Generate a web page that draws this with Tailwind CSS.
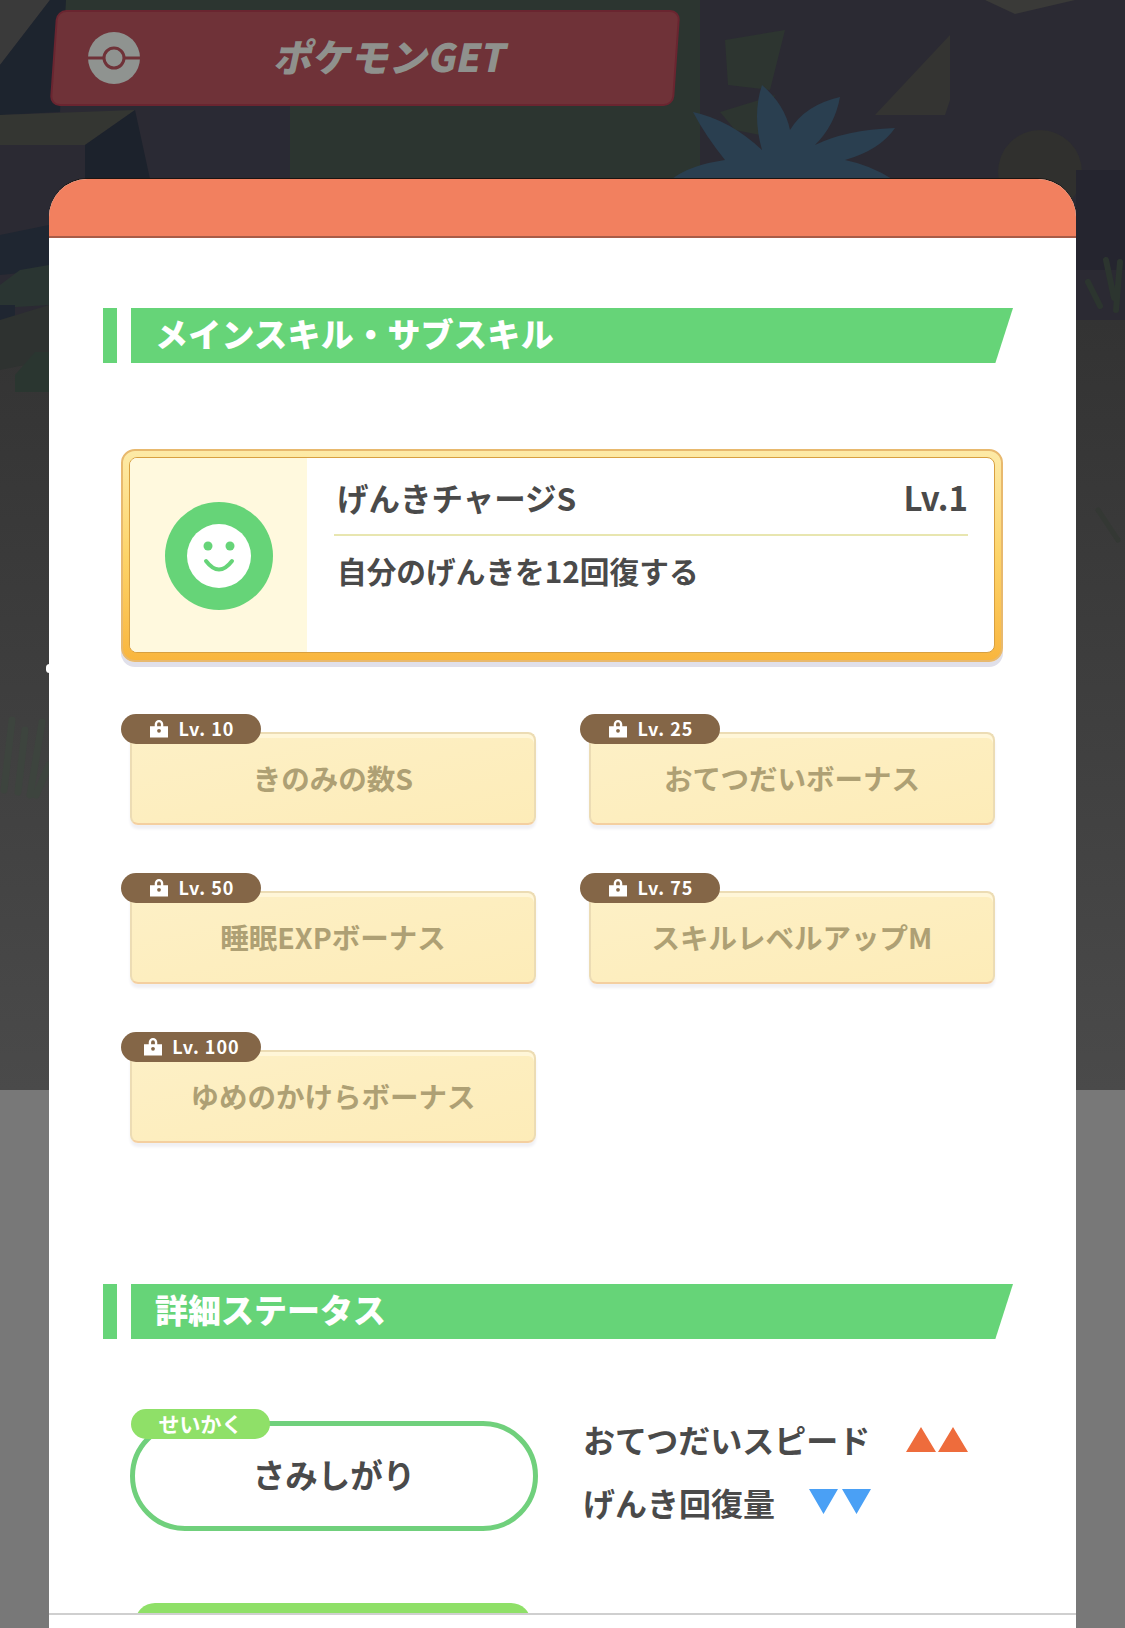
<!DOCTYPE html>
<html lang="ja">
<head>
  <meta charset="UTF-8" />
  <title>ポケモンGET</title>
  <script src="https://cdn.jsdelivr.net/npm/@tailwindcss/browser@4"></script>
</head>
<body class="bg-[#787878]">
  <div class="relative w-[1125px] h-[1628px] overflow-hidden font-['Noto_Sans_CJK_JP',sans-serif] font-bold text-[#4a4a4a]">

    <!-- jungle backdrop, dimmed -->
    <svg class="absolute left-0 top-0" width="1125" height="1090" viewBox="0 0 1125 1090">
      <defs>
        <linearGradient id="fade" x1="0" y1="0" x2="0" y2="1">
          <stop offset="0" stop-color="#333333" />
          <stop offset="1" stop-color="#4a4a4a" />
        </linearGradient>
      </defs>
      <rect width="1125" height="340" fill="#2b2a33" />
      <rect y="320" width="1125" height="770" fill="url(#fade)" />
      <polygon points="60,0 700,0 700,179 290,179 290,106 60,106" fill="#2c3530" />
      <polygon points="0,0 50,0 0,65" fill="#3a3a3a" />
      <polygon points="0,65 50,0 66,0 60,112 0,115" fill="#1d242e" />
      <polygon points="0,115 135,110 85,145 0,145" fill="#343632" />
      <polygon points="85,145 135,110 150,179 85,179" fill="#1c222c" />
      <polygon points="150,106 290,106 290,179 150,179" fill="#2a2a34" />
      <polygon points="0,235 49,225 49,270 0,275" fill="#1f2631" />
      <polygon points="0,285 20,270 49,265 49,305 0,308" fill="#2a3532" />
      <polygon points="0,305 15,305 15,320 0,325" fill="#1f2631" />
      <polygon points="0,320 49,305 49,360 0,370" fill="#2e3230" />
      <polygon points="15,375 35,352 49,352 49,392 15,392" fill="#2a3630" />
      <polygon points="700,0 760,0 760,179 700,179" fill="#2b2a33" />
      <polygon points="725,40 785,30 770,90 728,85" fill="#2d3530" />
      <polygon points="720,112 775,95 760,135 735,130" fill="#2d3530" />
      <path d="M672 179 Q690 165 725 160 Q705 135 693 112 Q730 120 762 150 Q752 115 762 85 Q785 105 790 130 Q805 105 840 97 Q835 125 815 145 Q845 130 895 128 Q880 150 845 160 Q870 165 892 179 Z" fill="#2a3f50" />
      <polygon points="875,115 950,35 950,100 945,115" fill="#343432" />
      <circle cx="1040" cy="172" r="42" fill="#30302e" />
      <polygon points="985,0 1075,0 1015,14" fill="#3a3a38" />
      <rect x="1076" y="170" width="49" height="100" fill="#25252f" />
      <g fill="none" stroke-linecap="round">
        <path d="M1088 282 L1100 306 M1106 260 L1114 298 M1120 262 L1116 310" stroke="#2c352f" stroke-width="6" />
        <path d="M1098 510 L1118 540" stroke="#343834" stroke-width="5" />
        <path d="M4 790 L12 720 M18 792 L25 730 M30 795 L42 722 M36 795 L49 765" stroke="#3d443e" stroke-width="7" />
      </g>
    </svg>

    <!-- get banner -->
    <div class="relative pt-[10px] pl-[53px]">
      <div class="w-[624px] h-[96px] -skew-x-[4deg] rounded-[10px] bg-[#6f3238] border-2 border-[#6a2530] flex items-center relative">
        <svg class="ml-[32px] skew-x-[4deg]" width="54" height="54" viewBox="0 0 54 54">
          <circle cx="27" cy="27" r="26" fill="#8f9390" />
          <rect x="0" y="25.500" width="54" height="3" fill="#6f3238" />
          <circle cx="27" cy="27" r="10" fill="#8f9390" stroke="#6f3238" stroke-width="3" />
        </svg>
        <span class="absolute left-[221px] top-[18px] text-[38.500px] leading-[50px] font-black text-[#8f918d] -skew-x-[8deg]">ポケモンGET</span>
      </div>
    </div>

    <!-- modal -->
    <div class="relative ml-[49px] mt-[73px] w-[1027px] h-[1449px] rounded-t-[38px] bg-white overflow-hidden shadow-[0_-1px_0_#1a1512]">
      <div class="h-[59px] bg-[#f2805f] border-b-2 border-b-[#a85c48]"></div>

      <div class="h-[1375px] overflow-hidden pt-[70px]">
        <!-- main skill / sub skill -->
        <div class="flex pl-[54px] gap-[14px] h-[55px]">
          <div class="w-[14px] bg-[#66d478]"></div>
          <div class="w-[882px] bg-[#66d478] [clip-path:polygon(0_0,100%_0,98%_100%,0_100%)] pl-[24px] text-[33px] tracking-[0.3px] leading-[50px] font-black text-white">メインスキル・サブスキル</div>
        </div>

        <div class="mt-[86px] ml-[72px] w-[882px] h-[213px] rounded-[14px] border-2 border-[#e8b96e] bg-gradient-to-b from-[#fdeaa6] via-[#fdd469] to-[#f9b63e] px-[6px] pt-[6px] pb-[7px] shadow-[0_5px_0_#e0e0ea]">
          <div class="h-full flex rounded-[8px] bg-white overflow-hidden border border-[#d8a040]">
            <div class="w-[177px] bg-[#fff9de] flex items-center justify-center pt-[2px]">
              <svg width="108" height="108" viewBox="0 0 108 108">
                <circle cx="54" cy="54" r="54" fill="#66d478" />
                <circle cx="54" cy="54" r="32" fill="#fff" />
                <circle cx="43" cy="44" r="4.500" fill="#66d478" />
                <circle cx="65" cy="44" r="4.500" fill="#66d478" />
                <path d="M41 59 Q54 76 67 59" fill="none" stroke="#66d478" stroke-width="4" stroke-linecap="round" />
              </svg>
            </div>
            <div class="flex-1 pl-[27px] pr-[26px]">
              <div class="flex justify-between items-center h-[78px] pt-[3px] pl-[3px] border-b-2 border-[#e8e6b0] text-[31.500px]">
                <span>げんきチャージS</span>
                <span class="text-[33px]">Lv.1</span>
              </div>
              <p class="pl-[3px] pt-[13px] text-[29.700px] leading-[44px]">自分のげんきを12回復する</p>
            </div>
          </div>
        </div>

        <div class="mt-[70px] ml-[81px] grid grid-cols-[406px_406px] gap-x-[53px] gap-y-[66px] text-[28.500px] text-[#aea074]">
          <div class="relative h-[93px] rounded-[8px] border-2 border-[#ecdcb4] border-b-[#f4cfa0] bg-gradient-to-br from-[#fdf0c6] to-[#fdecb8] flex items-center justify-center shadow-[inset_0_4px_0_#fff6d8,0_4px_3px_#f0f0f4]">
            きのみの数S
            <div class="absolute -left-[11px] -top-[20px] w-[140px] h-[30px] pb-[2px] rounded-full bg-[#846647] flex items-center justify-center gap-[11px] text-[18px] tracking-[1px] text-white">
              <svg class="ml-[2px]" width="18" height="19" viewBox="0 0 19 19"><path d="M5 7V5a4.500 4.500 0 0 1 9 0v2h5v12H0V7Zm2.500 0h4V5a2 2 0 0 0-4 0Z" fill="#fff" /><circle cx="9.500" cy="12" r="2" fill="#846647" /></svg>
              <span>Lv. 10</span>
            </div>
          </div>
          <div class="relative h-[93px] rounded-[8px] border-2 border-[#ecdcb4] border-b-[#f4cfa0] bg-gradient-to-br from-[#fdf0c6] to-[#fdecb8] flex items-center justify-center shadow-[inset_0_4px_0_#fff6d8,0_4px_3px_#f0f0f4]">
            おてつだいボーナス
            <div class="absolute -left-[11px] -top-[20px] w-[140px] h-[30px] pb-[2px] rounded-full bg-[#846647] flex items-center justify-center gap-[11px] text-[18px] tracking-[1px] text-white">
              <svg class="ml-[2px]" width="18" height="19" viewBox="0 0 19 19"><path d="M5 7V5a4.500 4.500 0 0 1 9 0v2h5v12H0V7Zm2.500 0h4V5a2 2 0 0 0-4 0Z" fill="#fff" /><circle cx="9.500" cy="12" r="2" fill="#846647" /></svg>
              <span>Lv. 25</span>
            </div>
          </div>
          <div class="relative h-[93px] rounded-[8px] border-2 border-[#ecdcb4] border-b-[#f4cfa0] bg-gradient-to-br from-[#fdf0c6] to-[#fdecb8] flex items-center justify-center shadow-[inset_0_4px_0_#fff6d8,0_4px_3px_#f0f0f4]">
            睡眠EXPボーナス
            <div class="absolute -left-[11px] -top-[20px] w-[140px] h-[30px] pb-[2px] rounded-full bg-[#846647] flex items-center justify-center gap-[11px] text-[18px] tracking-[1px] text-white">
              <svg class="ml-[2px]" width="18" height="19" viewBox="0 0 19 19"><path d="M5 7V5a4.500 4.500 0 0 1 9 0v2h5v12H0V7Zm2.500 0h4V5a2 2 0 0 0-4 0Z" fill="#fff" /><circle cx="9.500" cy="12" r="2" fill="#846647" /></svg>
              <span>Lv. 50</span>
            </div>
          </div>
          <div class="relative h-[93px] rounded-[8px] border-2 border-[#ecdcb4] border-b-[#f4cfa0] bg-gradient-to-br from-[#fdf0c6] to-[#fdecb8] flex items-center justify-center shadow-[inset_0_4px_0_#fff6d8,0_4px_3px_#f0f0f4]">
            スキルレベルアップM
            <div class="absolute -left-[11px] -top-[20px] w-[140px] h-[30px] pb-[2px] rounded-full bg-[#846647] flex items-center justify-center gap-[11px] text-[18px] tracking-[1px] text-white">
              <svg class="ml-[2px]" width="18" height="19" viewBox="0 0 19 19"><path d="M5 7V5a4.500 4.500 0 0 1 9 0v2h5v12H0V7Zm2.500 0h4V5a2 2 0 0 0-4 0Z" fill="#fff" /><circle cx="9.500" cy="12" r="2" fill="#846647" /></svg>
              <span>Lv. 75</span>
            </div>
          </div>
          <div class="relative h-[93px] rounded-[8px] border-2 border-[#ecdcb4] border-b-[#f4cfa0] bg-gradient-to-br from-[#fdf0c6] to-[#fdecb8] flex items-center justify-center shadow-[inset_0_4px_0_#fff6d8,0_4px_3px_#f0f0f4]">
            ゆめのかけらボーナス
            <div class="absolute -left-[11px] -top-[20px] w-[140px] h-[30px] pb-[2px] rounded-full bg-[#846647] flex items-center justify-center gap-[10px] text-[18px] tracking-[1px] text-white">
              <svg class="ml-[2px]" width="18" height="19" viewBox="0 0 19 19"><path d="M5 7V5a4.500 4.500 0 0 1 9 0v2h5v12H0V7Zm2.500 0h4V5a2 2 0 0 0-4 0Z" fill="#fff" /><circle cx="9.500" cy="12" r="2" fill="#846647" /></svg>
              <span>Lv. 100</span>
            </div>
          </div>
        </div>

        <!-- details -->
        <div class="mt-[141px] flex pl-[54px] gap-[14px] h-[55px]">
          <div class="w-[14px] bg-[#66d478]"></div>
          <div class="w-[882px] bg-[#66d478] [clip-path:polygon(0_0,100%_0,98%_100%,0_100%)] pl-[24px] text-[33px] leading-[50px] font-black text-white">詳細ステータス</div>
        </div>

        <div class="mt-[82px] ml-[81px] flex gap-[45px]">
          <div class="relative w-[408px] h-[110px] rounded-full border-[5px] border-[#70d07c] flex items-center justify-center pb-[3px] text-[32.500px]">
            さみしがり
            <div class="absolute -left-[4px] -top-[17px] w-[139px] h-[30px] rounded-full bg-[#8fe068] text-center text-[21px] leading-[28px] text-white">せいかく</div>
          </div>
          <div class="-mt-[1px] flex flex-col gap-[25px] text-[32px]">
            <div class="h-[38px] flex items-center gap-[36px]">
              <span>おてつだいスピード</span>
              <svg width="62" height="26" viewBox="0 0 62 26"><path d="M15 1 30 26H0Z M47 1 62 26H32Z" fill="#ee6c3c" /></svg>
            </div>
            <div class="h-[38px] flex items-center gap-[34px]">
              <span>げんき回復量</span>
              <svg width="62" height="26" viewBox="0 0 62 26"><path d="M0 0H29L14.500 25Z M33 0H62L47.500 25Z" fill="#4aa0f5" /></svg>
            </div>
          </div>
        </div>

        <div class="mt-[72px] ml-[86px] w-[396px] h-[30px] rounded-t-[20px] bg-[#8fe068]"></div>
      </div>

      <div class="absolute left-0 right-0 top-[1434px] h-[15px] bg-white border-t-2 border-[#cfcfcf]"></div>
    </div>

    <div class="absolute left-[46px] top-[664px] w-[7px] h-[9px] rounded-full bg-white"></div>
  </div>
</body>
</html>
